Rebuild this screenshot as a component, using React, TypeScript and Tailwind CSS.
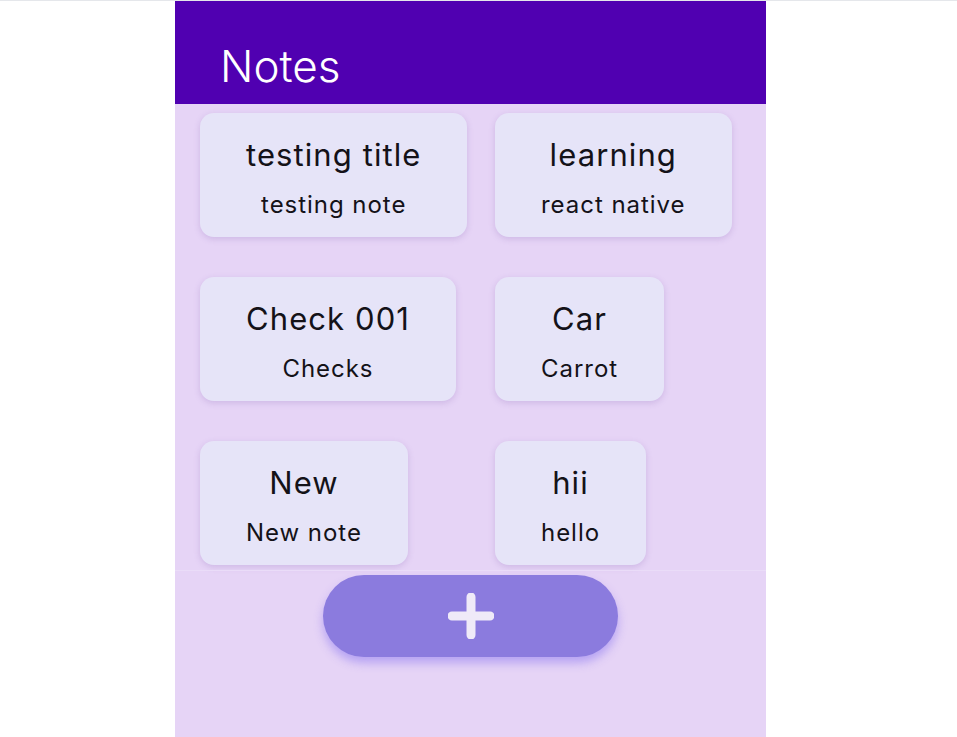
import React from "react";

type Note = { title: string; body: string };

const notes: Note[] = [
  { title: "testing title", body: "testing note" },
  { title: "learning", body: "react native" },
  { title: "Check 001", body: "Checks" },
  { title: "Car", body: "Carrot" },
  { title: "New", body: "New note" },
  { title: "hii", body: "hello" },
];

const font = { fontFamily: "Inter, 'Noto Sans', sans-serif" };

const NoteCard = ({ note }: { note: Note }) => (
  <div className="pl-[25px] flex">
    <div className="h-[124px] px-[46px] pt-[7px] rounded-[14px] bg-[#e6e4f8] shadow-[0_2px_6px_rgba(120,80,170,0.22)] flex flex-col items-center justify-center gap-[17px] text-[#141218]">
      <p className="text-[31px] leading-[36px] tracking-[0.035em] whitespace-nowrap">{note.title}</p>
      <p className="text-[24px] leading-[30px] tracking-[0.04em] whitespace-nowrap">{note.body}</p>
    </div>
  </div>
);

export default function App() {
  return (
    <div className="min-h-screen bg-white border-t border-gray-200" style={font}>
      <div className="ml-[175px] w-[591px] h-[736px] flex flex-col bg-[#e6d4f6]">
        <header className="h-[103px] shrink-0 bg-[#5000b1] flex items-end pl-[45px] pb-[10px]">
          <h1 className="text-[44px] leading-[56px] font-light text-white">Notes</h1>
        </header>

        <main className="flex-1 grid grid-cols-[295px_1fr] content-start gap-y-[40px] pt-[9px]">
          {notes.map((n) => (
            <NoteCard key={n.title} note={n} />
          ))}
        </main>

        <footer className="h-[167px] shrink-0 border-t border-[#eadcf8] flex justify-center pt-[4px]">
          <button className="w-[295px] h-[82px] rounded-full bg-[#8b7bde] shadow-[0_6px_10px_rgba(125,105,240,0.45)] flex items-center justify-center">
            <svg width="46" height="46" viewBox="0 0 46 46">
              <path
                d="M23 4v38M4 23h38"
                stroke="#efeaf8"
                strokeWidth="9"
                strokeLinecap="round"
              />
            </svg>
          </button>
        </footer>
      </div>
    </div>
  );
}
